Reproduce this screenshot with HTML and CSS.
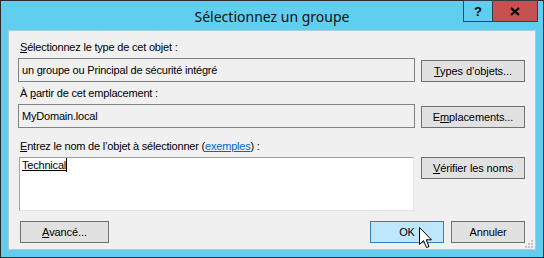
FILE: index.html
```html
<!DOCTYPE html>
<html lang="fr">
<head>
    <meta charset="UTF-8">
    <title>Sélectionnez un groupe</title>
    <link rel="stylesheet" href="styles.css">
</head>
<body>
    <div class="window">
        <div class="titlebar">
            <span></span>
            <div class="title">Sélectionnez un groupe</div>
            <div class="caption-buttons">
                <div class="cap-btn help">?</div>
                <div class="cap-btn close">
                    <svg width="10" height="9" viewBox="0 0 10 9">
                        <path d="M1 1 L9 8 M9 1 L1 8" stroke="#000" stroke-width="2.2" fill="none"/>
                    </svg>
                </div>
            </div>
        </div>

        <div class="client">
            <div class="label first"><u>S</u>électionnez le type de cet objet :</div>
            <div class="row">
                <div class="field">un groupe ou Principal de sécurité intégré</div>
                <button class="btn"><u>T</u>ypes d’objets...</button>
            </div>

            <div class="label second">À <u>p</u>artir de cet emplacement :</div>
            <div class="row">
                <div class="field">MyDomain.local</div>
                <button class="btn">E<u>m</u>placements...</button>
            </div>

            <div class="label third"><u>E</u>ntrez le nom de l’objet à sélectionner (<a href="#">exemples</a>) :</div>
            <div class="row names">
                <div class="names-box"><span class="typed">Technical</span><span class="caret"></span></div>
                <button class="btn"><u>V</u>érifier les noms</button>
            </div>

            <div class="footer">
                <button class="btn advanced"><u>A</u>vancé...</button>
                <div class="footer-right">
                    <button class="btn ok">OK</button>
                    <button class="btn">Annuler</button>
                </div>
            </div>

            <!-- mouse pointer over OK -->
            <svg class="cursor" width="14" height="22" viewBox="0 0 14 22">
                <path d="M0.5 0.5 V17.5 L4.5 13.5 L7.5 20.5 L10 19.5 L7.2 12.8 H12.5 Z" fill="#fff" stroke="#000" stroke-width="1"/>
            </svg>

            <svg class="grip" width="9" height="9" viewBox="0 0 9 9">
                <rect x="6" y="0" width="2" height="2" fill="#c4c4c4"/>
                <rect x="3" y="3" width="2" height="2" fill="#c4c4c4"/>
                <rect x="6" y="3" width="2" height="2" fill="#c4c4c4"/>
                <rect x="0" y="6" width="2" height="2" fill="#c4c4c4"/>
                <rect x="3" y="6" width="2" height="2" fill="#c4c4c4"/>
                <rect x="6" y="6" width="2" height="2" fill="#c4c4c4"/>
            </svg>
        </div>
    </div>
</body>
</html>
```

FILE: styles.css
```css
* {
    margin: 0;
    padding: 0;
    box-sizing: border-box;
}

body {
    background: #fff;
    font-family: 'Liberation Sans', Arial, sans-serif;
    font-size: 11px;
    color: #000;
}

.window {
    width: 544px;
    height: 258px;
    border: 1px solid #2b2b2b;
    background: #61cdef;
}

/* title bar */
.titlebar {
    height: 29px;
    display: grid;
    grid-template-columns: 1fr auto 1fr;
    align-items: start;
}

.title {
    font-family: 'Noto Sans', sans-serif;
    font-size: 14px;
    line-height: 18px;
    padding-top: 7px;
    color: #111;
}

.caption-buttons {
    justify-self: end;
    display: flex;
    margin-top: -1px;
    margin-right: 5px;
}

.cap-btn {
    height: 22px;
    border: 1px solid #2f3f47;
    display: flex;
    align-items: center;
    justify-content: center;
}

.cap-btn.help {
    width: 30px;
    font-weight: bold;
    font-size: 13px;
    font-family: 'Liberation Sans', sans-serif;
}

.cap-btn.close {
    width: 46px;
    margin-left: -1px;
    background: #c75050;
}

/* client area */
.client {
    position: relative;
    margin: 0 7px;
    height: 220px;
    background: #f0f0f0;
    box-shadow: inset 0 0 0 1px #a9cbdb;
    padding: 11px 11px 0 10px;
}

.label {
    line-height: 13px;
    padding-left: 2px;
    letter-spacing: -0.2px;
}

.label.second {
    margin-top: 5px;
}

.label.third {
    margin-top: 12px;
}

.label a {
    color: #0066cc;
}

.row {
    display: grid;
    grid-template-columns: 1fr 104px;
    column-gap: 6px;
    align-items: end;
    margin-top: 4px;
}

.field {
    height: 24px;
    border: 1px solid #828282;
    background: #f0f0f0;
    padding-left: 3px;
    line-height: 22px;
    letter-spacing: -0.2px;
}

.btn {
    height: 22px;
    border: 1px solid #707070;
    background: #e1e1e1;
    font-family: 'Liberation Sans', Arial, sans-serif;
    font-size: 11px;
    letter-spacing: -0.1px;
    color: #000;
}

.row.names {
    align-items: start;
}

.names-box {
    height: 54px;
    margin: 0 1px;
    background: #fff;
    border: 1px solid #e3e3e3;
    border-top-color: #a0a0a0;
    border-left-color: #a0a0a0;
    padding: 0 2px;
    line-height: 13px;
    letter-spacing: -0.2px;
}

.typed {
    text-decoration: underline;
}

.caret {
    display: inline-block;
    width: 1px;
    height: 14px;
    background: #000;
    vertical-align: -3px;
}

.footer {
    display: flex;
    justify-content: space-between;
    margin-top: 10px;
    padding-left: 2px;
}

.btn.advanced {
    width: 89px;
}

.footer-right {
    display: flex;
    gap: 7px;
}

.footer-right .btn {
    width: 74px;
}

.btn.ok {
    background: #bee6fd;
    border-color: #3c7fb1;
}

.cursor {
    position: absolute;
    left: 411px;
    top: 197px;
}

.grip {
    position: absolute;
    right: 2px;
    bottom: 1px;
}
```
